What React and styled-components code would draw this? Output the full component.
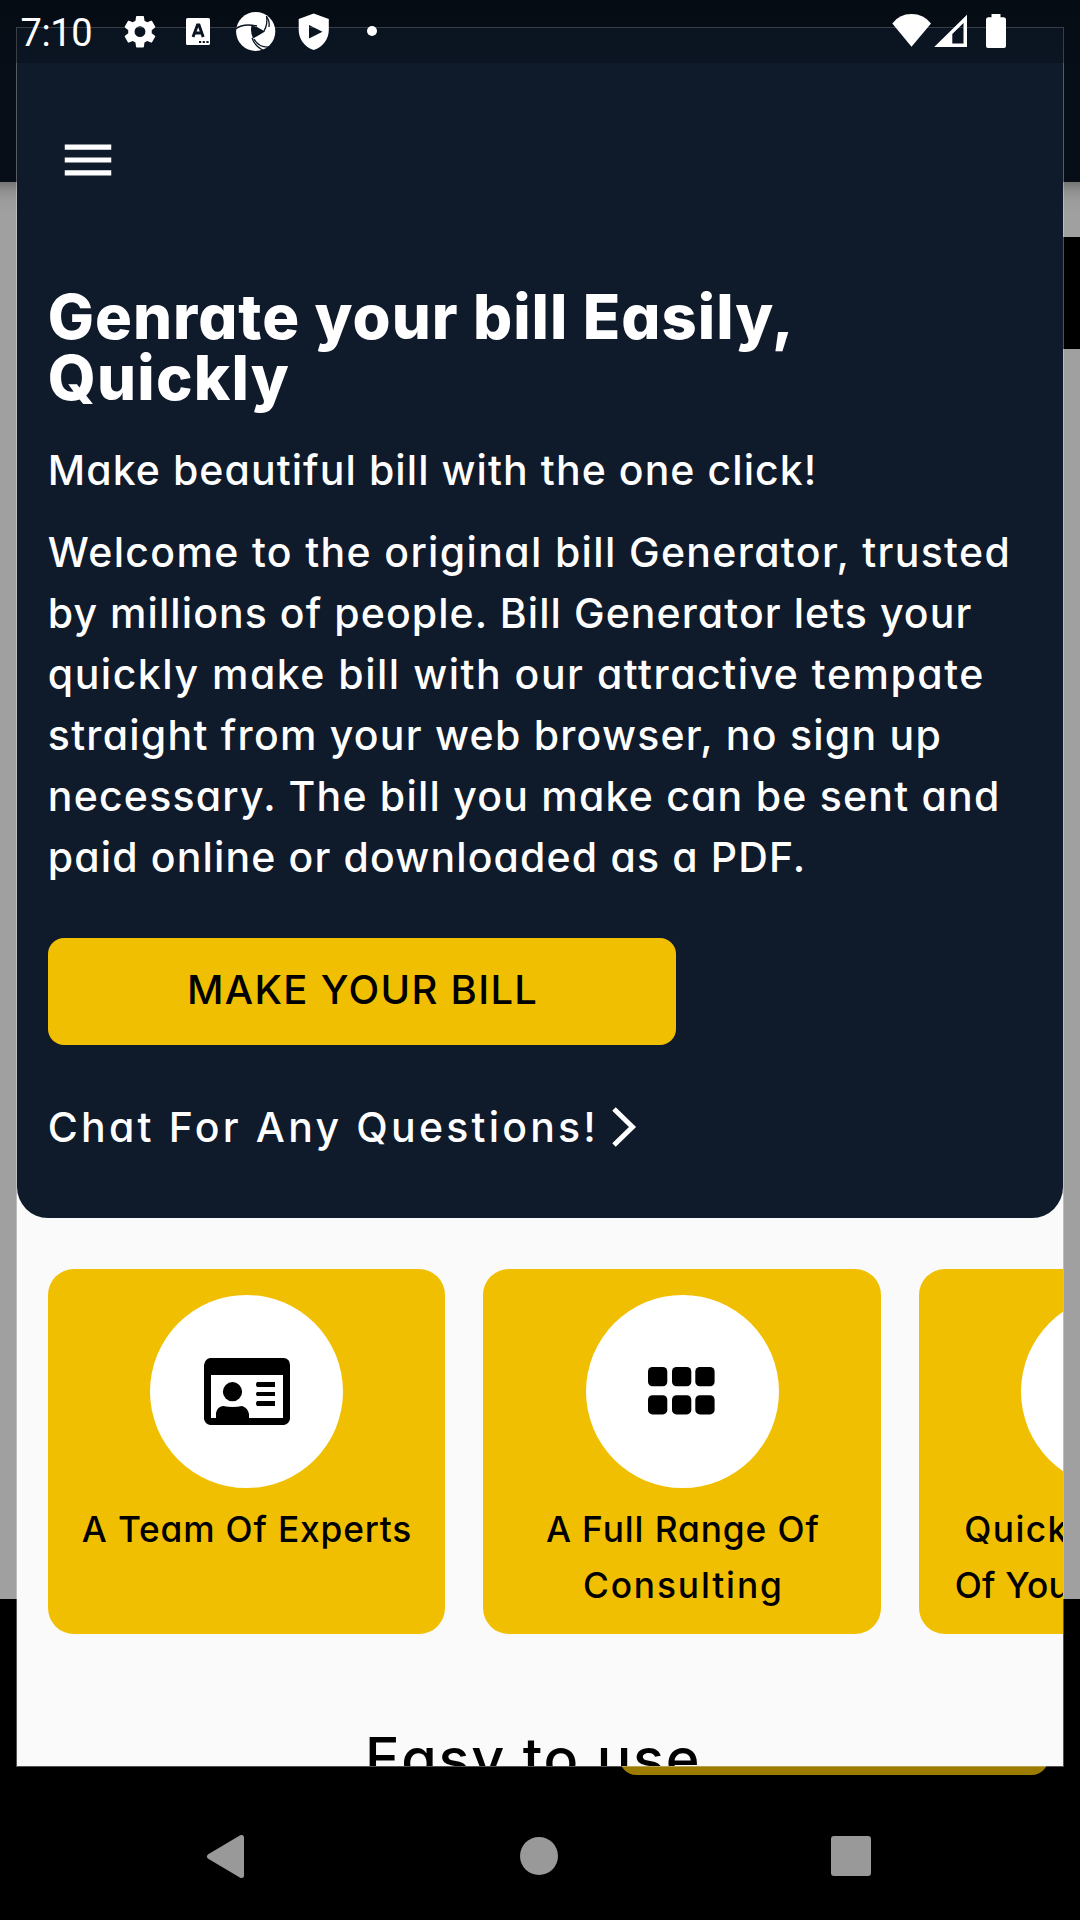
import React, { useLayoutEffect, useRef, useState } from 'react';
import styled, { createGlobalStyle } from 'styled-components';

const navy = '#0f1a2b';
const gold = '#f1bf01';

const GlobalStyle = createGlobalStyle`
  * { box-sizing: border-box; }
  body { margin: 0; background: #000; overflow: hidden; }
`;

const Screen = styled.div`
  position: relative;
  width: 1080px;
  height: 1920px;
  overflow: hidden;
  display: flex;
  flex-direction: column;
  background: #000;
  font-family: Inter, 'Open Sans', sans-serif;
  font-feature-settings: 'cv11' 1;
`;

/* Dimmed page behind the drawer */
const DimAppBar = styled.div`
  height: 182.4px;
  flex: none;
  background: #080e18;
`;

const DimPage = styled.div`
  height: 1416.2px;
  flex: none;
  display: flex;
  justify-content: flex-end;
  align-items: flex-start;
  padding-top: 54.4px;
  background: linear-gradient(#757575 0, #8f8f8f 9px, #9b9b9b 18px, #a0a0a0 32px);
`;

const DimBlock = styled.div`
  width: 200px;
  height: 112px;
  background: #000;
`;

const DimFooter = styled.div`
  flex: none;
  height: 176.4px;
  display: flex;
  justify-content: flex-end;
  align-items: flex-end;
  padding-right: 32px;
`;

const DimButton = styled.div`
  width: 428px;
  height: 106px;
  border-radius: 16px;
  background: #9b7b00;
`;

const NavBar = styled.nav`
  flex: 1;
  display: flex;
  align-items: center;
  justify-content: space-between;
  padding: 18px 209px 0 206px;
`;

const HomeIcon = styled.svg`
  margin-left: 3px;
`;

const Dialog = styled.main`
  position: absolute;
  left: 16px;
  top: 27px;
  width: 1048px;
  height: 1740px;
  overflow: hidden;
  border: 1px solid rgba(250, 250, 250, 0.33);
  background: #fafafa;
  background-clip: padding-box;
`;

const Hero = styled.section`
  height: 1190.3px;
  padding: 101px 0 0 30.8px;
  display: flex;
  flex-direction: column;
  align-items: flex-start;
  color: #fff;
  background: ${navy};
  border-radius: 0 0 31px 31px;
`;

const MenuButton = styled.button`
  width: 62px;
  height: 62px;
  margin-left: 9.7px;
  padding: 0;
  border: 0;
  background: none;
  display: block;
`;

const Line = styled.span`
  display: block;
  width: max-content;
  white-space: pre;
`;

const Title = styled.h1`
  margin: 94.5px 0 0;
  font-size: 61.5px;
  line-height: 61px;
  font-weight: 800;
`;

const Copy = styled.p`
  margin: ${(p) => p.$top}px 0 0;
  font-size: 41px;
  line-height: 61px;
  font-weight: 500;
`;

const MakeButton = styled.button`
  width: 628.4px;
  height: 107.6px;
  margin: 50px 0 0;
  padding: 0 0 4px;
  border: 0;
  border-radius: 16px;
  display: flex;
  align-items: center;
  justify-content: center;
  color: #000;
  background: ${gold};
  font: 500 40px/61px Inter, sans-serif;
`;

const ChatLink = styled.div`
  margin-top: 51.3px;
  height: 61px;
  display: flex;
  align-items: center;
  gap: 16px;
  font-size: 41px;
  line-height: 61px;
  font-weight: 500;
`;

const CardRow = styled.section`
  display: flex;
  gap: 38px;
  padding: 50.7px 0 0 30.7px;
`;

const Card = styled.article`
  flex: none;
  width: 397.8px;
  height: 365px;
  padding-top: 25.6px;
  border-radius: 26px;
  background: ${gold};
  display: flex;
  flex-direction: column;
  align-items: center;
`;

const Disc = styled.div`
  width: 193.6px;
  height: 193.6px;
  border-radius: 50%;
  background: #fff;
  display: flex;
  align-items: center;
  justify-content: center;
`;

const CardLabel = styled.div`
  margin-top: 13.5px;
  align-self: ${(p) => (p.$indent ? 'flex-start' : 'center')};
  display: flex;
  flex-direction: column;
  align-items: ${(p) => (p.$indent ? 'flex-start' : 'center')};
  padding-left: ${(p) => p.$indent || 0}px;
  color: #000;
  font-size: 35.3px;
  line-height: 56px;
  font-weight: 500;
`;

const Indented = styled.div`
  padding-left: ${(p) => p.$by}px;
`;

const SectionTitle = styled.h2`
  margin: 83.6px 0 0 348px;
  font-size: 57.5px;
  line-height: 80px;
  font-weight: 500;
  color: #000;
`;

const StatusBar = styled.header`
  position: absolute;
  inset: 0 0 auto 0;
  height: 63px;
  display: flex;
  align-items: flex-start;
  background: linear-gradient(rgba(2, 10, 16, 0.62), rgba(2, 10, 16, 0.36) 44%, rgba(2, 10, 16, 0.32));
  color: #fff;
`;

const Clock = styled.span`
  width: 98px;
  padding: 11px 0 0 20.5px;
  font: 400 38px/45px Roboto, sans-serif;
  white-space: nowrap;
`;

const StatusIcons = styled.svg`
  width: 982px;
  height: 63px;
  display: block;
  fill: #fff;
`;

/* Tracks a single line of text out to a set width. */
function Fit({ width, children }) {
  const ref = useRef(null);
  const [gap, setGap] = useState(0);
  useLayoutEffect(() => {
    const natural = ref.current.getBoundingClientRect().width;
    setGap((width - natural) / (children.length - 1));
  }, [width, children]);
  return (
    <Line ref={ref} style={{ letterSpacing: gap, marginRight: -gap }}>
      {children}
    </Line>
  );
}

const paragraph = [
  ['Welcome to the original bill Generator, trusted', 962],
  ['by millions of people. Bill Generator lets your', 923.5],
  ['quickly make bill with our attractive tempate', 935.5],
  ['straight from your web browser, no sign up', 893],
  ['necessary. The bill you make can be sent and', 951.5],
  ['paid online or downloaded as a PDF.', 757.5],
];

function TeamIcon() {
  return (
    <svg width="86" height="67" viewBox="0 0 86 67">
      <path
        fillRule="evenodd"
        d="M6 0H80Q86 1 86 7V61Q85 66 80 67H6Q1 66 0 61V7Q1 1 6 0ZM7 17V60H12V55Q13 49 19 48Q29 50 38 48Q44 50 45 56V60H79V17Z"
      />
      <circle cx="28.5" cy="33.7" r="9.6" />
      <path d="M53 24H71V29H53Q51 26.500 53 24ZM53 34H71V38H53Q51 36 53 34ZM53 43H71V48H53Q51 45.500 53 43Z" />
    </svg>
  );
}

function GridIcon() {
  return (
    <svg width="69" height="49" viewBox="0 0 69 49">
      {[0, 24, 47.3].map((x) =>
        [0, 28.2].map((y) => (
          <rect key={`${x}-${y}`} x={x} y={y} width="19.3" height="19.2" rx="4.5" />
        ))
      )}
    </svg>
  );
}

export default function App() {
  return (
    <Screen>
      <GlobalStyle />
      <DimAppBar />
      <DimPage>
        <DimBlock />
      </DimPage>
      <DimFooter>
        <DimButton />
      </DimFooter>
      <NavBar>
        <svg width="38" height="43" viewBox="0 0 38 43">
          <path d="M3.500 21.500L35.500 2.500V40.500Z" fill="#999" stroke="#999" strokeWidth="5" strokeLinejoin="round" />
        </svg>
        <HomeIcon width="38" height="38" viewBox="0 0 38 38">
          <circle cx="19" cy="19" r="19" fill="#999" />
        </HomeIcon>
        <svg width="40" height="40" viewBox="0 0 40 40">
          <rect width="40" height="40" rx="3" fill="#999" />
        </svg>
      </NavBar>

      <Dialog>
        <Hero>
          <MenuButton aria-label="Menu">
            <svg width="62" height="62" viewBox="0 0 24 24" fill="#fff">
              <path d="M3 18h18v-2H3v2zm0-5h18v-2H3v2zm0-7v2h18V6H3z" />
            </svg>
          </MenuButton>
          <Title>
            <Fit width={746}>Genrate your bill Easily,</Fit>
            <Fit width={241}>Quickly</Fit>
          </Title>
          <Copy $top={32.5}>
            <Fit width={768.5}>Make beautiful bill with the one click!</Fit>
          </Copy>
          <Copy as="div" $top={20.7}>
            {paragraph.map(([text, width]) => (
              <Fit key={text} width={width}>
                {text}
              </Fit>
            ))}
          </Copy>
          <MakeButton>
            <Fit width={350}>MAKE YOUR BILL</Fit>
          </MakeButton>
          <ChatLink>
            <Fit width={548}>Chat For Any Questions!</Fit>
            <svg width="25" height="40" viewBox="0 0 25 40">
              <path d="M2 2L20.500 20L2 38" fill="none" stroke="#fff" strokeWidth="5" />
            </svg>
          </ChatLink>
        </Hero>

        <CardRow>
          <Card>
            <Disc>
              <TeamIcon />
            </Disc>
            <CardLabel>
              <Fit width={329.5}>A Team Of Experts</Fit>
            </CardLabel>
          </Card>
          <Card>
            <Disc>
              <GridIcon />
            </Disc>
            <CardLabel>
              <Fit width={273}>A Full Range Of</Fit>
              <Fit width={199}>Consulting</Fit>
            </CardLabel>
          </Card>
          <Card>
            <Disc />
            <CardLabel $indent={35.5}>
              <Indented $by={9.5}>
                <Fit width={103}>Quick</Fit>
              </Indented>
              <Fit width={115}>Of You</Fit>
            </CardLabel>
          </Card>
        </CardRow>

        <SectionTitle>
          <Fit width={334.5}>Easy to use</Fit>
        </SectionTitle>
      </Dialog>

      <StatusBar>
        <Clock>
          <Fit width={72}>7:10</Fit>
        </Clock>
        <StatusIcons viewBox="98 0 982 63">
          <g transform="translate(120.3 12) scale(1.64)">
            <path d="M19.140 12.940c.04-.3.06-.61.06-.94 0-.32-.02-.64-.07-.94l2.030-1.580c.18-.14.23-.41.12-.61l-1.920-3.320c-.12-.22-.37-.29-.59-.22l-2.390.96c-.5-.38-1.030-.7-1.620-.94l-.36-2.540c-.04-.24-.24-.41-.48-.41h-3.840c-.24 0-.43.17-.47.41l-.36 2.540c-.59.24-1.130.57-1.620.94l-2.390-.96c-.22-.08-.47 0-.59.22L2.740 8.870c-.12.21-.08.47.12.61l2.030 1.580c-.05.3-.09.63-.09.94s.02.64.07.94l-2.030 1.580c-.18.14-.23.41-.12.61l1.920 3.320c.12.22.37.29.59.22l2.390-.96c.5.38 1.030.7 1.620.94l.36 2.540c.05.24.24.41.48.41h3.840c.24 0 .44-.17.47-.41l.36-2.540c.59-.24 1.130-.56 1.620-.94l2.390.96c.22.08.47 0 .59-.22l1.920-3.320c.12-.22.07-.47-.12-.61l-2.010-1.580zM12 15.300a3.300 3.300 0 1 1 0-6.600 3.300 3.300 0 0 1 0 6.600z" />
          </g>
          <rect x="186" y="18" width="24" height="27" rx="1.500" />
          <path
            d="M193 37L197.500 25H199L203.200 37M194.600 33H201.500"
            fill="none"
            stroke="#0b1421"
            strokeWidth="2.900"
          />
          <path d="M199 41h2.200v2H199zM202.700 41h2.200v2h-2.200zM206.400 41h2.200v2h-2.200z" fill="#0b1421" />
          <circle cx="255.700" cy="31.500" r="19.600" />
          <path d="M251.500 25.500L257 27L265 31.500L260 34.500L253 38.500Q250 32 251.500 25.500Z" fill="#0b1421" />
          <g fill="none" stroke="#0b1421" strokeWidth="1.300">
            <path d="M235.500 29Q243 23 257 26" />
            <path d="M264 31Q268 24 266.500 16" />
            <path d="M266.500 17Q270 21 269 27" />
            <path d="M252 38Q255 47 265 51" />
            <path d="M254 39Q259 48 270 47" />
          </g>
          <path fillRule="evenodd" d="M313.700 13.500L328.800 19V30C328.800 39 323 47 313.700 50C304.500 47 298.700 39 298.700 30V19ZM309 25V38.500L322.500 31.700Z" />
          <circle cx="372" cy="31" r="5" />
          <path d="M892.300 23.500Q899 14 911.500 14T931 23.500L911.500 46.700Z" />
          <path fillRule="evenodd" d="M967 14.700V47H934.200ZM963.500 23L952.300 34V43.500H963.500Z" />
          <path d="M991.500 14H1000.500V17.300H1004Q1006 17.500 1006 19.500V46Q1006 48 1004 48H988Q986 48 986 46V19.500Q986 17.500 988 17.300H991.500Z" />
        </StatusIcons>
      </StatusBar>
    </Screen>
  );
}
